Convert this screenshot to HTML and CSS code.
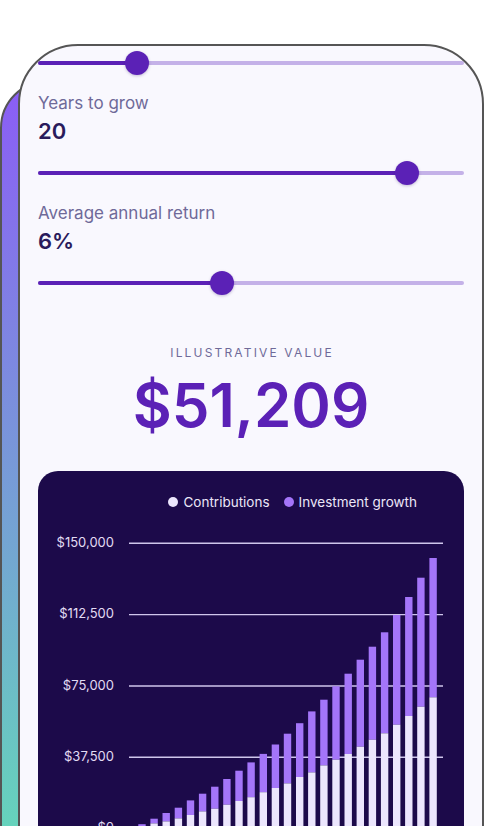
FILE: index.html
```html
<!DOCTYPE html>
<html lang="en">
<head>
    <meta charset="UTF-8">
    <meta name="viewport" content="width=device-width, initial-scale=1.0">
    <title>Growth calculator</title>
    <link rel="stylesheet" href="styles.css">
</head>
<body>
    <div class="stage">
        <div class="phone-back"></div>

        <div class="phone">
            <div class="screen">
                <!-- Monthly contribution (scrolled off the top) -->
                <div class="slider">
                    <div class="track"><div class="fill" style="width: 23.3%"></div></div>
                    <span class="thumb" style="left: 23.3%"></span>
                </div>

                <div class="field">
                    <div class="field-label">Years to grow</div>
                    <div class="field-value">20</div>
                </div>
                <div class="slider">
                    <div class="track"><div class="fill" style="width: 86.7%"></div></div>
                    <span class="thumb" style="left: 86.7%"></span>
                </div>

                <div class="field">
                    <div class="field-label">Average annual return</div>
                    <div class="field-value">6%</div>
                </div>
                <div class="slider">
                    <div class="track"><div class="fill" style="width: 43.1%"></div></div>
                    <span class="thumb" style="left: 43.1%"></span>
                </div>

                <div class="summary">
                    <div class="summary-label">Illustrative value</div>
                    <div class="summary-value">$51,209</div>
                </div>

                <div class="chart">
                    <div class="legend">
                        <span class="legend-item"><span class="dot dot-contrib"></span>Contributions</span>
                        <span class="legend-item"><span class="dot dot-growth"></span>Investment growth</span>
                    </div>
                    <svg class="plot" width="426" height="340" viewBox="0 0 426 340">
                        <g class="axis">
                            <text x="76" y="24.3">$150,000</text>
                            <text x="76" y="95.6">$112,500</text>
                            <text x="76" y="167">$75,000</text>
                            <text x="76" y="238.3">$37,500</text>
                            <text x="76" y="309.7">$0</text>
                        </g>
                        <g class="grid">
                            <line x1="91" x2="405" y1="24.3" y2="24.3"></line>
                            <line x1="91" x2="405" y1="95.6" y2="95.6"></line>
                            <line x1="91" x2="405" y1="167" y2="167"></line>
                            <line x1="91" x2="405" y1="238.3" y2="238.3"></line>
                            <line x1="91" x2="405" y1="309.7" y2="309.7"></line>
                        </g>
                        <!-- each bar: growth on top, contributions below, baseline at y=309.7 -->
                        <g class="growth">
                            <rect x="100.3" y="305.2" width="7.4" height="2.5"></rect>
                            <rect x="112.4" y="299.7" width="7.4" height="4.7"></rect>
                            <rect x="124.5" y="294" width="7.4" height="8.4"></rect>
                            <rect x="136.7" y="288.7" width="7.4" height="10.7"></rect>
                            <rect x="148.8" y="281.4" width="7.4" height="14.6"></rect>
                            <rect x="160.9" y="274.7" width="7.4" height="17.7"></rect>
                            <rect x="173.1" y="267.7" width="7.4" height="22"></rect>
                            <rect x="185.2" y="260" width="7.4" height="25.7"></rect>
                            <rect x="197.3" y="251.7" width="7.4" height="30.3"></rect>
                            <rect x="209.4" y="243.4" width="7.4" height="34.8"></rect>
                            <rect x="221.6" y="234.9" width="7.4" height="38.3"></rect>
                            <rect x="233.7" y="225.5" width="7.4" height="43.5"></rect>
                            <rect x="245.8" y="214.7" width="7.4" height="49.7"></rect>
                            <rect x="258" y="204.2" width="7.4" height="53.8"></rect>
                            <rect x="270.1" y="192.4" width="7.4" height="61"></rect>
                            <rect x="282.2" y="180.7" width="7.4" height="65.7"></rect>
                            <rect x="294.3" y="167.3" width="7.4" height="73.4"></rect>
                            <rect x="306.5" y="154.7" width="7.4" height="80.3"></rect>
                            <rect x="318.6" y="140.7" width="7.4" height="87"></rect>
                            <rect x="330.7" y="127.7" width="7.4" height="93"></rect>
                            <rect x="342.9" y="113.3" width="7.4" height="101"></rect>
                            <rect x="355" y="96" width="7.4" height="109.7"></rect>
                            <rect x="367.1" y="78" width="7.4" height="119"></rect>
                            <rect x="379.2" y="58.7" width="7.4" height="129"></rect>
                            <rect x="391.4" y="39" width="7.4" height="139.3"></rect>
                        </g>
                        <g class="contrib">
                            <rect x="100.3" y="307.7" width="7.4" height="2"></rect>
                            <rect x="112.4" y="304.4" width="7.4" height="5.3"></rect>
                            <rect x="124.5" y="302.4" width="7.4" height="7.3"></rect>
                            <rect x="136.7" y="299.4" width="7.4" height="10.3"></rect>
                            <rect x="148.8" y="296" width="7.4" height="13.7"></rect>
                            <rect x="160.9" y="292.4" width="7.4" height="17.3"></rect>
                            <rect x="173.1" y="289.7" width="7.4" height="20"></rect>
                            <rect x="185.2" y="285.7" width="7.4" height="24"></rect>
                            <rect x="197.3" y="282" width="7.4" height="27.7"></rect>
                            <rect x="209.4" y="278.2" width="7.4" height="31.5"></rect>
                            <rect x="221.6" y="273.2" width="7.4" height="36.5"></rect>
                            <rect x="233.7" y="269" width="7.4" height="40.7"></rect>
                            <rect x="245.8" y="264.4" width="7.4" height="45.3"></rect>
                            <rect x="258" y="258" width="7.4" height="51.7"></rect>
                            <rect x="270.1" y="253.4" width="7.4" height="56.3"></rect>
                            <rect x="282.2" y="246.4" width="7.4" height="63.3"></rect>
                            <rect x="294.3" y="240.7" width="7.4" height="69"></rect>
                            <rect x="306.5" y="235" width="7.4" height="74.7"></rect>
                            <rect x="318.6" y="227.7" width="7.4" height="82"></rect>
                            <rect x="330.7" y="220.7" width="7.4" height="89"></rect>
                            <rect x="342.9" y="214.3" width="7.4" height="95.4"></rect>
                            <rect x="355" y="205.7" width="7.4" height="104"></rect>
                            <rect x="367.1" y="197" width="7.4" height="112.7"></rect>
                            <rect x="379.2" y="187.7" width="7.4" height="122"></rect>
                            <rect x="391.4" y="178.3" width="7.4" height="131.4"></rect>
                        </g>
                    </svg>
                </div>
            </div>
        </div>
    </div>
</body>
</html>
```

FILE: styles.css
```css
html, body {
    margin: 0;
    padding: 0;
    background-color: #ffffff;
}
body {
    font-family: Inter, "Noto Sans", Arial, sans-serif;
}
.stage {
    position: relative;
    height: 100vh;
    overflow: hidden;
}

/* phone peeking out behind the main one */
.phone-back {
    position: absolute;
    left: 0;
    top: 80px;
    width: 200px;
    height: 900px;
    box-sizing: border-box;
    border: 2px solid #555555;
    border-radius: 48px;
    background: linear-gradient(#8b5cf6, #5eebb0);
}

.phone {
    position: relative;
    margin: 44px 0 0 18px;
    width: 466px;
    height: 900px;
    box-sizing: border-box;
    border: 2px solid #555555;
    border-radius: 60px 60px 0 0;
    background-color: #f9f8fe;
    overflow: hidden;
}
.screen {
    padding: 5px 18px 0;
}

/* sliders */
.slider {
    position: relative;
    padding: 10px 0;
}
.track {
    height: 4px;
    border-radius: 2px;
    background-color: #c4b1e8;
}
.fill {
    height: 100%;
    border-radius: 2px;
    background-color: #5b21b6;
}
.thumb {
    position: absolute;
    top: 0;
    width: 24px;
    height: 24px;
    margin-left: -12px;
    border-radius: 50%;
    background-color: #5b21b6;
    box-shadow: 0 1px 3px rgba(40, 10, 90, 0.25);
}

.field {
    margin: 18px 0 16px;
}
.field-label {
    font-size: 17px;
    line-height: 20px;
    color: #6f6a99;
}
.field-value {
    margin-top: 4px;
    font-size: 22px;
    line-height: 28px;
    font-weight: 600;
    color: #2a1b5c;
}

/* result */
.summary {
    margin-top: 50px;
    text-align: center;
}
.summary-label {
    padding-left: 0.18em;
    font-size: 12px;
    line-height: 16px;
    letter-spacing: 0.18em;
    text-transform: uppercase;
    color: #6f6a99;
}
.summary-value {
    margin-top: 14px;
    font-size: 60px;
    line-height: 60px;
    font-weight: 600;
    color: #5b21b6;
}

/* chart card */
.chart {
    margin-top: 36px;
    height: 420px;
    padding-top: 22px;
    box-sizing: border-box;
    border-radius: 20px;
    background-color: #1c0a4a;
}
.legend {
    display: flex;
    justify-content: flex-end;
    gap: 14px;
    padding-right: 47px;
    font-size: 13.5px;
    line-height: 18px;
    color: #ebe6f8;
}
.legend-item {
    display: flex;
    align-items: center;
    gap: 5px;
}
.dot {
    width: 10px;
    height: 10px;
    border-radius: 50%;
}
.dot-contrib {
    background-color: #ece6fd;
}
.dot-growth {
    background-color: #a475f9;
}
.plot {
    display: block;
    margin-top: 8px;
}
.axis text {
    font-family: Inter, "Noto Sans", Arial, sans-serif;
    font-size: 13px;
    fill: #e2dcf3;
    text-anchor: end;
    dominant-baseline: middle;
}
.grid line {
    stroke: #cfc6ec;
    stroke-width: 1.4;
}
.growth rect {
    fill: #a475f9;
}
.contrib rect {
    fill: #ece6fd;
}
```
